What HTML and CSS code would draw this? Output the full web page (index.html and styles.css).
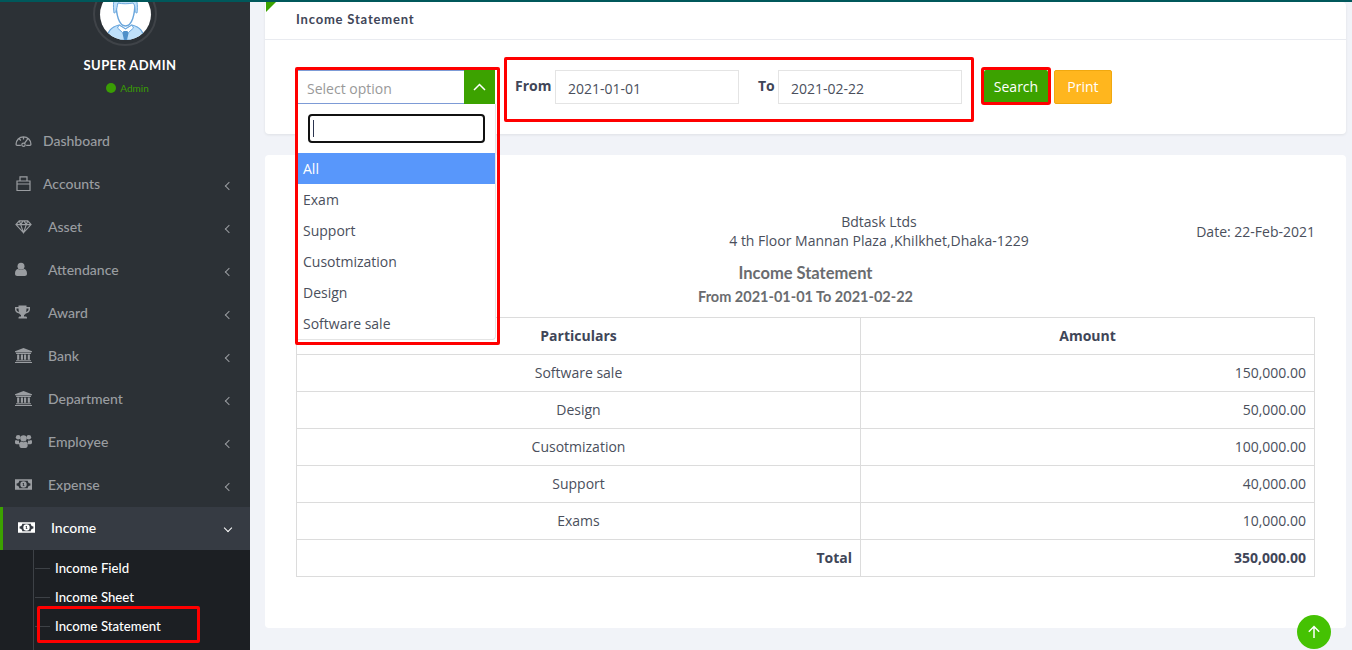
FILE: index.html
```html
<!DOCTYPE html>
<html lang="en">
<head>
    <meta charset="UTF-8">
    <meta name="viewport" content="width=device-width, initial-scale=1.0">
    <title>Income Statement</title>
    <link rel="stylesheet" href="styles.css">
</head>
<body>
    <svg class="sprites" width="0" height="0">
        <symbol id="i-gauge" viewBox="0 0 16 12"><path d="M1 9.500a7 7 0 0 1 14 0c0 .6-.4 1-1 1h-3.500M5.500 10.500H2c-.6 0-1-.4-1-1M4 4.500l1.500 1.500M8 3v2M12 4.500l-3 4" fill="none" stroke="currentColor" stroke-width="1.200"/><circle cx="8" cy="10" r="1.600" fill="none" stroke="currentColor" stroke-width="1.100"/></symbol>
        <symbol id="i-case" viewBox="0 0 17 15"><path d="M2 5h13v9.500H2zM2 8h13M5 5V.8h7V5" fill="none" stroke="currentColor" stroke-width="1.200"/></symbol>
        <symbol id="i-gem" viewBox="0 0 18 14"><path d="M4.500 1h9L17 5l-8 8.500L1 5zM1 5h16M6 5l3 8.500L12 5 9.500 1h-1zM4.500 1 6 5M13.500 1 12 5" fill="none" stroke="currentColor" stroke-width="1.200"/></symbol>
        <symbol id="i-user" viewBox="0 0 17 14"><circle cx="6" cy="3.700" r="3.500" fill="currentColor"/><path d="M0 11c0-3 1.500-4.500 3-4.500 1.800 1.200 4.200 1.200 6 0 1.500 0 3 1.500 3 4.500 0 1.800-1 2.500-2.200 2.500H2.200C1 13.500 0 12.800 0 11z" fill="currentColor"/></symbol>
        <symbol id="i-trophy" viewBox="0 0 17 14"><path d="M3.500 0h8v1.500H15V4c0 2.200-2 3.800-4.200 4-.5.700-1.100 1.200-1.800 1.500V11h1.500c1 0 1.500.6 1.500 1.300v.7H3.500v-.7c0-.7.500-1.300 1.500-1.300H6V9.500C5.300 9.200 4.700 8.700 4.200 8 2 7.800 0 6.200 0 4V1.500h3.500zM1.500 3v1c0 1 .9 2 2.500 2.400-.3-1-.5-2.200-.5-3.400zm12 0h-2c0 1.200-.2 2.400-.5 3.400 1.600-.4 2.500-1.400 2.500-2.400z" fill="currentColor"/></symbol>
        <symbol id="i-bank" viewBox="0 0 16 14"><path d="M8 0l8 3v1H0V3zM1 4.500h14v1H1zM2 6h2v5H2zM5.500 6h2v5h-2zM8.500 6h2v5h-2zM12 6h2v5h-2zM1 11.500h14v1H1zM0 13h16v1H0z" fill="currentColor"/></symbol>
        <symbol id="i-users" viewBox="0 0 16 13"><circle cx="3" cy="2.500" r="2.200" fill="currentColor"/><circle cx="13" cy="2.500" r="2.200" fill="currentColor"/><circle cx="8" cy="3.500" r="3" fill="currentColor"/><path d="M0 6.500c0-1 .5-1.500 1-1.500 1 .8 2 .8 2.800.6-.2 1.400.2 2.600 1 3.400H1.500C.5 9 0 8.500 0 7.500zM16 6.500c0-1-.5-1.500-1-1.500-1 .8-2 .8-2.800.6.200 1.400-.2 2.600-1 3.400h3.300c1 0 1.500-.5 1.500-1.500zM4 9.500c0-1.800 1-3 2-3 1.200.9 2.800.9 4 0 1 0 2 1.200 2 3 0 2-1 3-2 3H6c-1 0-2-1-2-3z" fill="currentColor"/></symbol>
        <symbol id="i-money" viewBox="0 0 16 10"><path fill-rule="evenodd" d="M0 0h16v10H0zM4 1.500c0 1.400-1 2.500-2.500 2.500v2C3 6 4 7.100 4 8.500h8c0-1.400 1-2.500 2.500-2.500V4C13 4 12 2.900 12 1.500z" fill="currentColor"/><path fill-rule="evenodd" d="M8 2a3 3 0 1 0 0 6 3 3 0 0 0 0-6zM7.300 3.600h1.100v2.300h.6v.6H7.200v-.6h.5V4.500l-.5.300z" fill="currentColor"/></symbol>
    </svg>

    <aside class="sidebar">
        <div class="user-panel">
            <div class="avatar">
                <svg viewBox="0 0 51 51" width="51" height="51">
                    <path d="M7 51c.5-9 4-13 12-15l6.500 4 6.500-4c8 2 11.500 6 12 15z" fill="#bfe0fa" stroke="#6aa6dc" stroke-width="1.200"/>
                    <path d="M19 36l6.500 4 6.500-4 1.500 3-5 4.500h-6l-5-4.500z" fill="#fff" stroke="#6aa6dc"/>
                    <path d="M23.500 42h4l1 2.500-1.500 6.500h-3l-1.500-6.500z" fill="#4f8fc8"/>
                    <path d="M16 12c0 14 3 25 9.500 25S35 26 35 12z" fill="#fff" stroke="#6aa6dc" stroke-width="1.400"/>
                    <path d="M14 24c-1-8-1-15 3-17 4-2 14-2 17 0 3 2 4 9 3 17-1 0-2-1-2-2 0-3 0-6-2-8-5 1-11 1-15 0-1 3-1 6-2 8 0 1-1 2-2 2z" fill="#bfe0fa" stroke="#6aa6dc"/>
                </svg>
            </div>
            <div class="user-name">SUPER ADMIN</div>
            <div class="user-role"><span class="dot"></span>Admin</div>
        </div>

        <ul class="menu">
            <li class="menu-item"><svg class="icon"><use href="#i-gauge"/></svg><span class="lbl lbl-near">Dashboard</span></li>
            <li class="menu-item"><svg class="icon"><use href="#i-case"/></svg><span class="lbl lbl-near">Accounts</span><span class="chev"></span></li>
            <li class="menu-item"><svg class="icon"><use href="#i-gem"/></svg><span class="lbl">Asset</span><span class="chev"></span></li>
            <li class="menu-item"><svg class="icon"><use href="#i-user"/></svg><span class="lbl">Attendance</span><span class="chev"></span></li>
            <li class="menu-item"><svg class="icon"><use href="#i-trophy"/></svg><span class="lbl">Award</span><span class="chev"></span></li>
            <li class="menu-item"><svg class="icon"><use href="#i-bank"/></svg><span class="lbl">Bank</span><span class="chev"></span></li>
            <li class="menu-item"><svg class="icon"><use href="#i-bank"/></svg><span class="lbl">Department</span><span class="chev"></span></li>
            <li class="menu-item"><svg class="icon"><use href="#i-users"/></svg><span class="lbl">Employee</span><span class="chev"></span></li>
            <li class="menu-item"><svg class="icon"><use href="#i-money"/></svg><span class="lbl">Expense</span><span class="chev"></span></li>
            <li class="menu-item active"><svg class="icon"><use href="#i-money"/></svg><span class="lbl">Income</span><span class="chev chev-down"></span></li>
        </ul>
        <ul class="submenu">
            <li>Income Field</li>
            <li>Income Sheet</li>
            <li class="marked">Income Statement</li>
        </ul>
    </aside>

    <main class="content">
        <section class="card filter-card">
            <div class="card-head">Income Statement</div>
            <form class="filter-row">
                <div class="select-wrap">
                    <div class="select-box">
                        <span class="placeholder">Select option</span>
                        <span class="select-arrow">
                            <svg viewBox="0 0 13 8" width="13" height="8"><path d="M1 7l5.500-5.500L12 7" fill="none" stroke="#fff" stroke-width="1.500"/></svg>
                        </span>
                    </div>
                    <div class="dropdown">
                        <div class="search-wrap"><span class="fake-input"><span class="caret"></span></span></div>
                        <ul class="options">
                            <li class="selected">All</li>
                            <li>Exam</li>
                            <li>Support</li>
                            <li>Cusotmization</li>
                            <li>Design</li>
                            <li>Software sale</li>
                        </ul>
                    </div>
                </div>
                <div class="dates">
                    <label class="date-label">From</label>
                    <input class="date-input" type="text" value="2021-01-01">
                    <label class="date-label label-to">To</label>
                    <input class="date-input" type="text" value="2021-02-22">
                </div>
                <div class="search-mark"><button type="button" class="btn btn-search">Search</button></div>
                <button type="button" class="btn btn-print">Print</button>
            </form>
        </section>

        <section class="card report-card">
            <div class="company">
                <div class="company-name">Bdtask Ltds<br>4 th Floor Mannan Plaza ,Khilkhet,Dhaka-1229</div>
                <div class="report-date">Date: 22-Feb-2021</div>
            </div>
            <h2 class="report-title">Income Statement</h2>
            <h3 class="report-range">From 2021-01-01 To 2021-02-22</h3>
            <table class="report-table">
                <thead>
                    <tr><th>Particulars</th><th>Amount</th></tr>
                </thead>
                <tbody>
                    <tr><td>Software sale</td><td class="num">150,000.00</td></tr>
                    <tr><td>Design</td><td class="num">50,000.00</td></tr>
                    <tr><td>Cusotmization</td><td class="num">100,000.00</td></tr>
                    <tr><td>Support</td><td class="num">40,000.00</td></tr>
                    <tr><td>Exams</td><td class="num">10,000.00</td></tr>
                    <tr class="total"><td class="num">Total</td><td class="num">350,000.00</td></tr>
                </tbody>
            </table>
        </section>
    </main>

    <a class="to-top" href="#">
        <svg viewBox="0 0 14 14" width="14" height="14"><path d="M7 13V1.500M1.800 6.700 7 1.500l5.200 5.200" fill="none" stroke="#fff" stroke-width="1.500"/></svg>
    </a>
</body>
</html>
```

FILE: styles.css
```css
*, *::before, *::after {
    box-sizing: border-box;
}

html, body {
    height: 650px;
    overflow: hidden;
}

body {
    margin: 0;
    display: flex;
    background-color: #f1f3f8;
    border-top: 2px solid #00585b;
    font-family: "Open Sans", sans-serif;
    font-size: 14px;
    color: #4a4f5c;
}

.sprites {
    position: absolute;
}

ul {
    list-style: none;
    margin: 0;
    padding: 0;
}

/* sidebar */
.sidebar {
    width: 250px;
    flex: none;
    background-color: #2c3136;
    font-family: Lato, sans-serif;
}

.user-panel {
    height: 118px;
    text-align: center;
}

.avatar {
    width: 64px;
    height: 64px;
    margin: -20px 0 0 93px;
    padding: 4px;
    border: 2px solid #3f4348;
    border-radius: 50%;
    display: flex;
    align-items: center;
    justify-content: center;
}

.avatar svg {
    background-color: #fff;
    border-radius: 50%;
    flex: none;
}

.user-name {
    margin-top: 10px;
    padding-left: 10px;
    color: #fff;
    font-size: 13px;
    font-weight: 700;
    letter-spacing: 0.4px;
    line-height: 18px;
}

.user-role {
    margin-top: 8px;
    display: flex;
    justify-content: center;
    align-items: center;
    gap: 4px;
    padding-left: 5px;
    color: #3a9d04;
    font-size: 10px;
    line-height: 12px;
}

.dot {
    width: 10px;
    height: 10px;
    border-radius: 50%;
    background-color: #3a9d04;
}

.menu {
    margin-top: 20px;
}

.menu-item {
    height: 43px;
    display: flex;
    align-items: center;
    padding: 0 18px 0 15px;
    color: #9a9da1;
    font-size: 14px;
}

.icon {
    width: 17px;
    height: 15px;
    flex: none;
    margin-bottom: 2px;
}

.lbl {
    margin-left: 16px;
    padding-bottom: 2px;
    flex: 1;
    font-weight: 500;
}

.lbl-near {
    margin-left: 11px;
}

.chev {
    width: 6px;
    height: 6px;
    border-left: 1.500px solid #9a9da1;
    border-bottom: 1.500px solid #9a9da1;
    transform: rotate(45deg);
    margin-top: 3px;
}

.menu-item.active {
    background-color: #363b43;
    border-left: 3px solid #3ca200;
    color: #fff;
    padding-left: 15px;
    font-weight: 700;
}

.chev-down {
    border-color: #fff;
    transform: rotate(-45deg);
    margin: -1px 1px 0 0;
}

.submenu {
    height: 101px;
    padding-top: 4px;
    background-color: #1c1f23;
    background-image: linear-gradient(#3d4146, #3d4146);
    background-repeat: no-repeat;
    background-size: 1px 100%;
    background-position: 33px 0;
}

.submenu li {
    position: relative;
    height: 29px;
    line-height: 29px;
    padding-left: 55px;
    color: #fff;
    font-size: 13.200px;
    font-weight: 500;
}

.submenu li::before {
    content: "";
    position: absolute;
    left: 35px;
    top: 14px;
    width: 15px;
    height: 1px;
    background-color: #3d4146;
}

.marked::after {
    content: "";
    position: absolute;
    left: 37px;
    top: -6px;
    width: 163px;
    height: 37px;
    border: 3px solid #f00;
    border-radius: 2px;
}

/* main */
.content {
    flex: 1;
    min-width: 0;
    padding: 0 6px 0 15px;
    display: flex;
    flex-direction: column;
    gap: 21px;
}

.card {
    background-color: #fff;
    border-radius: 4px;
}

.filter-card {
    position: relative;
    height: 132px;
    flex: none;
    box-shadow: 0 1px 3px rgba(0, 0, 0, 0.08);
}

.filter-card::before {
    content: "";
    position: absolute;
    left: 1px;
    top: 0;
    border-top: 10px solid #3ca200;
    border-right: 10px solid transparent;
}

.card-head {
    height: 38px;
    padding-left: 31px;
    border-bottom: 1px solid #e9ebf0;
    font-family: Lato, sans-serif;
    font-size: 13px;
    font-weight: 700;
    letter-spacing: 0.8px;
    line-height: 34px;
    color: #3f4658;
}

.filter-row {
    display: flex;
    padding: 30px 0 0 33px;
}

.select-wrap {
    position: relative;
    width: 197px;
    flex: none;
}

.select-wrap::after {
    content: "";
    position: absolute;
    left: -3px;
    top: -3px;
    width: 205px;
    height: 278px;
    border: 3px solid #f00;
    border-radius: 2px;
    z-index: 3;
}

.select-box {
    height: 34px;
    display: flex;
    justify-content: space-between;
    border-top: 1px solid #7d9bd6;
    border-bottom: 1px solid #7d9bd6;
}

.placeholder {
    padding-left: 9px;
    color: #999;
    line-height: 36px;
}

.select-arrow {
    width: 31px;
    margin: -1px 0;
    background-color: #3ca200;
    display: flex;
    align-items: center;
    justify-content: center;
}

.dropdown {
    position: absolute;
    left: 0;
    top: 34px;
    width: 198px;
    z-index: 2;
    background-color: #fff;
    border-right: 1px solid #e4e4e4;
    border-bottom: 1px solid #e4e4e4;
    border-radius: 0 0 4px 0;
}

.search-wrap {
    padding: 10px;
    height: 49px;
}

.fake-input {
    display: block;
    height: 29px;
    border: 2px solid #111;
    border-radius: 4px;
    padding: 4px 0 0 3px;
}

.caret {
    display: block;
    width: 1px;
    height: 17px;
    background-color: #2c3550;
}

.options li {
    height: 31px;
    line-height: 31px;
    padding-left: 5px;
    color: #4a4f5c;
}

.options .selected {
    background-color: #5897fb;
    color: #fff;
}

.dates {
    position: relative;
    display: flex;
    margin-left: 20px;
}

.dates::after {
    content: "";
    position: absolute;
    left: -11px;
    top: -13px;
    width: 470px;
    height: 65px;
    border: 3px solid #f00;
    border-radius: 2px;
}

.date-label {
    width: 40px;
    color: #3f4658;
    font-weight: 700;
    line-height: 32px;
}

.label-to {
    width: 20px;
    margin-left: 19px;
}

.date-input {
    width: 184px;
    height: 34px;
    padding: 2px 12px 0;
    border: 1px solid #e4e4e4;
    outline: 0;
    color: #4a4f5c;
    font-family: inherit;
    font-size: 14px;
}

.search-mark {
    position: relative;
    margin-left: 22px;
}

.search-mark::after {
    content: "";
    position: absolute;
    left: -3px;
    top: -3px;
    width: 70px;
    height: 38px;
    border: 3px solid #f00;
    border-radius: 3px;
}

.btn {
    display: block;
    height: 34px;
    border: 1px solid transparent;
    border-radius: 2px;
    color: #fff;
    font-family: inherit;
    font-size: 14px;
    padding: 0 0 2px;
}

.btn-search {
    width: 64px;
    background-color: #3ca200;
}

.btn-print {
    width: 58px;
    margin-left: 6px;
    background-color: #ffb61e;
    border-color: #f0a80f;
}

.report-card {
    height: 473px;
    padding: 57px 31px 0;
    flex: none;
}

.company {
    display: grid;
    grid-template-columns: 1fr 168px;
    align-items: center;
    line-height: 19px;
}

.company-name {
    text-align: center;
    padding-left: 315px;
}

.report-date {
    text-align: right;
}

.report-title, .report-range {
    margin: 0;
    text-align: center;
    font-family: Lato, sans-serif;
    font-weight: 700;
    color: #6a6c70;
}

.report-title {
    margin-top: 12px;
    font-size: 16.500px;
    line-height: 23px;
}

.report-range {
    font-size: 14.500px;
    line-height: 23px;
}

.report-table {
    width: 1019px;
    margin-top: 9px;
    border-collapse: collapse;
    table-layout: fixed;
}

.report-table th, .report-table td {
    height: 37px;
    padding: 0 8px 2px;
    border: 1px solid #dcdcdc;
    text-align: center;
    font-size: 14px;
}

.report-table th:first-child {
    width: 564px;
}

.report-table th {
    color: #3f4658;
    font-weight: 700;
}

.report-table .num {
    text-align: right;
}

.total td {
    color: #3f4658;
    font-weight: 700;
}

.to-top {
    position: fixed;
    left: 1297px;
    top: 615px;
    width: 34px;
    height: 34px;
    border-radius: 50%;
    background-color: #45c203;
    display: flex;
    align-items: center;
    justify-content: center;
}
```
